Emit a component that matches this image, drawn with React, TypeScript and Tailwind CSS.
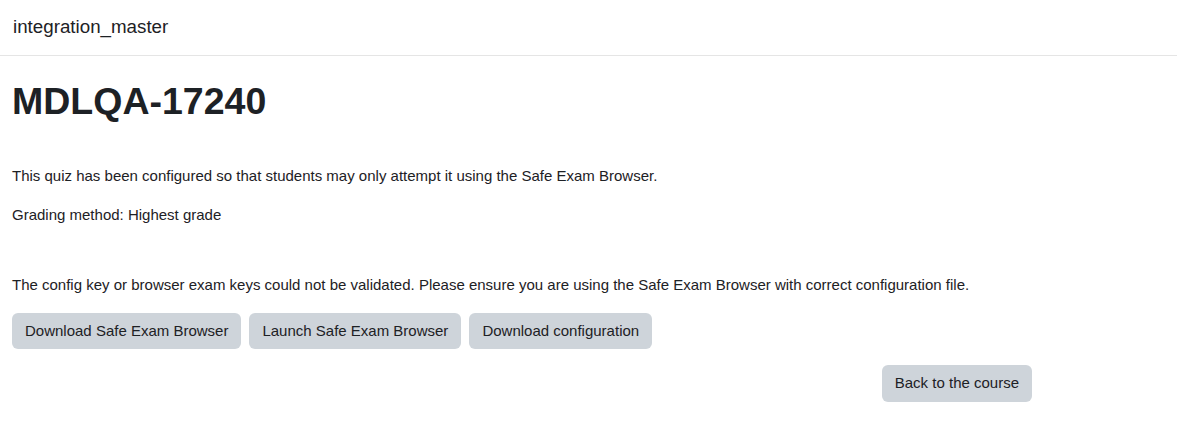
import React from 'react';

const btn =
  'bg-[#ced4da] text-[#1d2125] text-[15px] leading-[22.5px] px-[13px] py-[7px] rounded-md';

const App: React.FC = () => {
  return (
    <div className="min-h-screen bg-white text-[#1d2125] font-['Liberation_Sans',Arial,sans-serif]">
      {/* navbar */}
      <header className="h-[56px] border-b border-[#e5e5e5] flex items-center px-[13px]">
        <span className="text-[18.75px] leading-[28px] -mt-[2px] text-[#1d2125]">integration_master</span>
      </header>

      <main className="px-3">
        <h1 className="mt-[22px] text-[37.5px] leading-[46px] font-bold">MDLQA-17240</h1>

        <div className="mt-[41px] text-[15px] leading-[22.5px]">
          <p>This quiz has been configured so that students may only attempt it using the Safe Exam Browser.</p>
          <p className="mt-[16px]">Grading method: Highest grade</p>
        </div>

        <p className="mt-[48px] text-[15px] leading-[22.5px]">
          The config key or browser exam keys could not be validated. Please ensure you are using the Safe Exam Browser with correct configuration file.
        </p>

        <div className="mt-[16px] flex gap-2">
          <button className={btn}>Download Safe Exam Browser</button>
          <button className={btn}>Launch Safe Exam Browser</button>
          <button className={btn}>Download configuration</button>
        </div>

        <div className="mt-[16px] w-[1020px] flex justify-end">
          <button className={btn}>Back to the course</button>
        </div>
      </main>
    </div>
  );
};

export default App;
